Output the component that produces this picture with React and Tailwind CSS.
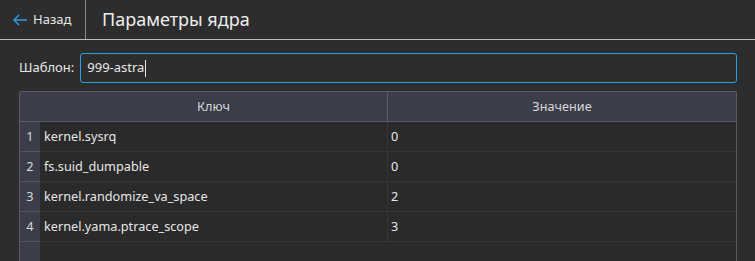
const ROWS = [
  { key: 'kernel.sysrq', value: '0' },
  { key: 'fs.suid_dumpable', value: '0' },
  { key: 'kernel.randomize_va_space', value: '2' },
  { key: 'kernel.yama.ptrace_scope', value: '3' },
]

export default function App() {
  return (
    <div className="w-[755px] h-[261px] overflow-hidden bg-[#2d2d2d] text-[#e6e6e6] flex flex-col" style={{ fontFamily: '"Noto Sans", "Open Sans", sans-serif' }}>
      {/* Header */}
      <div className="flex h-[40px] shrink-0 border-b border-[#bdbdbd]">
        <div className="w-[86px] flex items-center pl-[12px] gap-[5px] border-r border-[#8a8a8a] text-[13px]">
          <svg width="16" height="12" viewBox="0 0 16 12" fill="none">
            <path d="M15 6H2M7 1L2 6l5 5" stroke="#2a9fe6" strokeWidth="1.4" />
          </svg>
          <span>Назад</span>
        </div>
        <div className="flex items-center pl-[16px] text-[18px] text-[#eeeeee]">Параметры ядра</div>
      </div>

      {/* Template input */}
      <div className="flex items-center pl-[19px] pr-[18px] mt-[13px] gap-[6px]">
        <span className="text-[13px]">Шаблон:</span>
        <div className="flex-1 h-[30px] border border-[#2a9fe6] rounded-[3px] flex items-center pl-[6px] text-[13px]">
          999-astra
          <span className="inline-block w-px h-[17px] bg-[#e6e6e6] ml-px" />
        </div>
      </div>

      {/* Table */}
      <div className="ml-[19px] mr-[18px] mt-[8px] flex-1 border-l border-t border-r border-[#5c5c5c] rounded-tl-[2px] rounded-tr-[2px] bg-[#2a2a2a] text-[12.7px]">
        <div className="flex h-[30px] bg-[#3b3e4a] border-b border-[#5a5d68]">
          <div className="w-[20px]" />
          <div className="w-[348px] flex items-center justify-center border-r border-[#5a5d68] text-[#d8d8d8]">Ключ</div>
          <div className="flex-1 flex items-center justify-center text-[#d8d8d8]">Значение</div>
        </div>
        {ROWS.map((r, i) => (
          <div key={i} className="flex h-[30px]">
            <div className="w-[20px] bg-[#3b3e4a] border-b border-[#54575f] flex items-center justify-center text-[#d8d8d8]">{i + 1}</div>
            <div className="w-[348px] flex items-center pl-[4px] border-r border-b border-[#363636]">{r.key}</div>
            <div className="flex-1 flex items-center pl-[3px] border-b border-[#363636]">{r.value}</div>
          </div>
        ))}
        <div className="flex h-full">
          <div className="w-[20px] bg-[#3b3e4a]" />
        </div>
      </div>
    </div>
  )
}
